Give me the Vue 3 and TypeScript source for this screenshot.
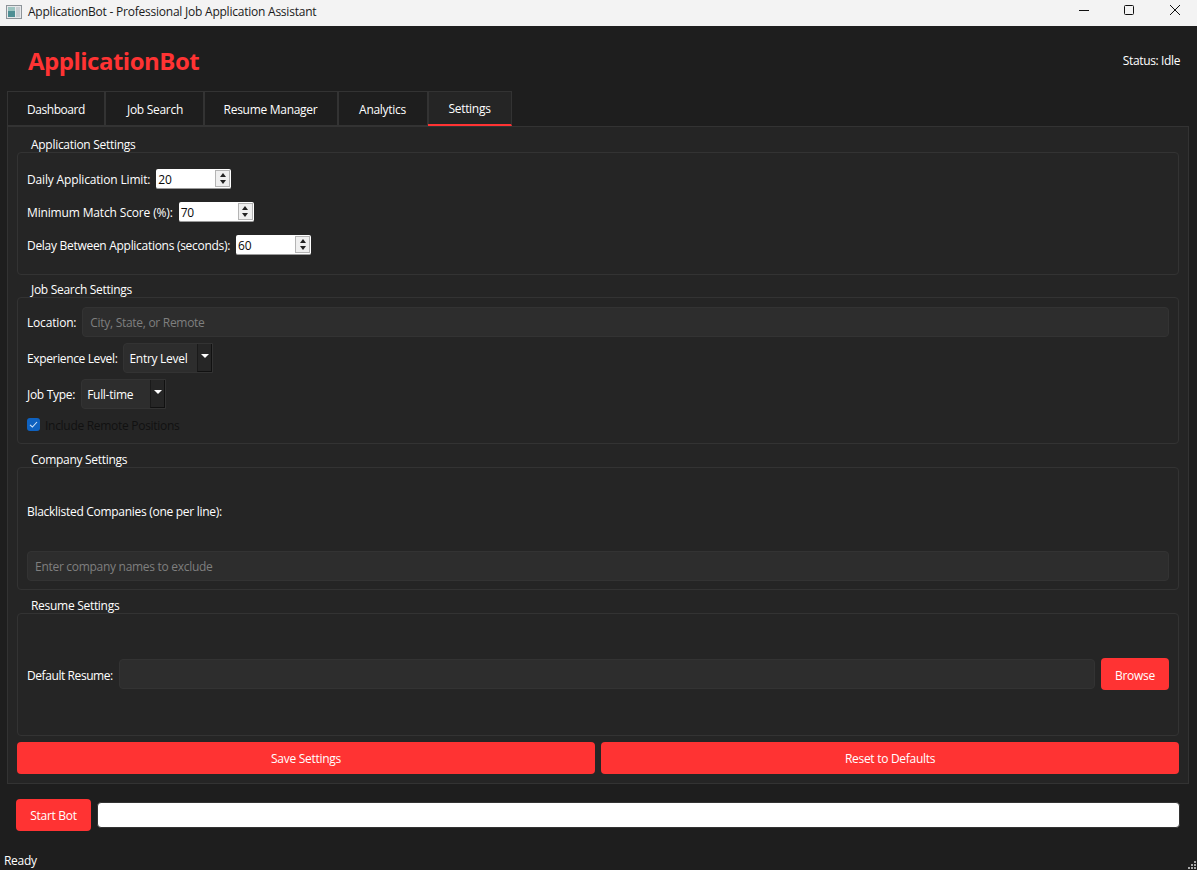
<script setup lang="ts">
const tabs = ['Dashboard', 'Job Search', 'Resume Manager', 'Analytics', 'Settings']
const spins = [
  { label: 'Daily Application Limit:', value: '20', cls: 'fit-daily' },
  { label: 'Minimum Match Score (%):', value: '70', cls: 'fit-score' },
  { label: 'Delay Between Applications (seconds):', value: '60', cls: '' },
]
const combos = [
  { label: 'Experience Level:', value: 'Entry Level', cls: 'combo-exp', fit: 'fit-exp' },
  { label: 'Job Type:', value: 'Full-time', cls: 'combo-job', fit: '' },
]
</script>

<template>
  <div class="window">
    <div class="titlebar">
      <svg class="app-icon" width="16" height="16" viewBox="0 0 16 16">
        <rect x="0.5" y="1.5" width="15" height="13" fill="#e6e8ea" stroke="#8d9499" />
        <rect x="2" y="3" width="7" height="10" fill="#4f8f94" />
        <rect x="2" y="3" width="7" height="4" fill="#9cc4c0" />
        <rect x="10" y="3" width="4" height="10" fill="#c9ced2" />
      </svg>
      <span class="title-text">ApplicationBot - Professional Job Application Assistant</span>
      <div class="win-controls">
        <svg width="12" height="12" viewBox="0 0 12 12"><path d="M1 6.5H11" stroke="#111" fill="none" /></svg>
        <svg width="12" height="12" viewBox="0 0 12 12"><rect x="1.5" y="1.5" width="9" height="9" rx="1" stroke="#111" fill="none" /></svg>
        <svg class="win-close" width="12" height="12" viewBox="0 0 12 12"><path d="M1 1L11 11M11 1L1 11" stroke="#111" fill="none" /></svg>
      </div>
    </div>

    <header class="header">
      <h1 class="brand">ApplicationBot</h1>
      <span class="status">Status: Idle</span>
    </header>

    <nav class="tabs">
      <div v-for="(t, i) in tabs" :key="t" class="tab" :class="[`tab-${i}`, { active: t === 'Settings' }]">{{ t }}</div>
    </nav>

    <main class="pane">
      <section class="group">
        <div class="group-title">Application Settings</div>
        <div class="box box-app">
          <div v-for="s in spins" :key="s.label" class="row" :class="s.cls">
            <label>{{ s.label }}</label>
            <div class="spin">
              <span class="spin-value">{{ s.value }}</span>
              <div class="spin-btns">
                <span class="arrow-up"></span>
                <span class="arrow-down"></span>
              </div>
            </div>
          </div>
        </div>
      </section>

      <section class="group">
        <div class="group-title">Job Search Settings</div>
        <div class="box box-job">
          <div class="row fit-location">
            <label>Location:</label>
            <input class="field grow" placeholder="City, State, or Remote" />
          </div>
          <div v-for="c in combos" :key="c.label" class="row" :class="c.fit">
            <label>{{ c.label }}</label>
            <div class="combo" :class="c.cls">
              <span class="combo-value">{{ c.value }}</span>
              <span class="combo-btn"><span class="combo-arrow"></span></span>
            </div>
          </div>
          <div class="check-row">
            <span class="checkbox">
              <svg width="9" height="9" viewBox="0 0 9 9"><path d="M1 4.8L3.4 7L8 2" stroke="#cfe3f7" stroke-width="1.1" fill="none" /></svg>
            </span>
            <span class="check-label">Include Remote Positions</span>
          </div>
        </div>
      </section>

      <section class="group">
        <div class="group-title">Company Settings</div>
        <div class="box box-company">
          <label>Blacklisted Companies (one per line):</label>
          <input class="field" placeholder="Enter company names to exclude" />
        </div>
      </section>

      <section class="group">
        <div class="group-title">Resume Settings</div>
        <div class="box box-resume">
          <label>Default Resume:</label>
          <input class="field grow" />
          <button class="btn browse">Browse</button>
        </div>
      </section>

      <div class="actions">
        <button class="btn action">Save Settings</button>
        <button class="btn action">Reset to Defaults</button>
      </div>
    </main>

    <div class="controls">
      <button class="btn start">Start Bot</button>
      <div class="progress"></div>
    </div>

    <footer class="statusbar">
      <span>Ready</span>
      <svg class="grip" width="10" height="10" viewBox="0 0 10 10" fill="#a8a8a8">
        <rect x="7" y="1" width="2" height="2" />
        <rect x="4" y="4" width="2" height="2" />
        <rect x="7" y="4" width="2" height="2" />
        <rect x="1" y="7" width="2" height="2" />
        <rect x="4" y="7" width="2" height="2" />
        <rect x="7" y="7" width="2" height="2" />
      </svg>
    </footer>
  </div>
</template>

<style>
html, body { margin: 0; background: #1e1e1e; }
</style>

<style scoped>
* { box-sizing: border-box; }
.window {
  width: 1197px;
  height: 870px;
  overflow: hidden;
  display: flex;
  flex-direction: column;
  background: #1e1e1e;
  color: #fff;
  font-family: "Open Sans", "Noto Sans", sans-serif;
  font-size: 12px;
  letter-spacing: -0.29px;
  line-height: 16px;
}
.titlebar {
  height: 26px;
  flex: none;
  background: #f3f3f3;
  color: #1a1a1a;
  display: flex;
  align-items: center;
  padding-left: 6px;
  padding-bottom: 2px;
}
.app-icon { margin-right: 6px; }
.title-text { flex: 1; letter-spacing: -0.23px; }
.win-controls {
  display: flex;
  gap: 33px;
  padding-right: 16px;
}
.win-controls svg { display: block; margin-top: -4px; }
.win-close { margin-left: 1px; }
.header {
  height: 65px;
  flex: none;
  display: flex;
  align-items: center;
  justify-content: space-between;
  padding: 4px 17px 0 28px;
}
.brand {
  margin: 0;
  color: #ff3333;
  font-size: 24px;
  line-height: 30px;
  font-weight: 700;
  letter-spacing: -0.5px;
}
.status { letter-spacing: -0.37px; }
.tabs {
  display: flex;
  flex: none;
  height: 36px;
  margin-left: 7px;
  margin-bottom: -1px;
  position: relative;
  z-index: 1;
}
.tab {
  height: 35px;
  display: flex;
  align-items: center;
  justify-content: center;
  border: 1px solid #333;
  background: #1e1e1e;
  padding-top: 2px;
}
.tab + .tab { border-left: none; box-shadow: inset 1px 0 0 #333; }
.tab-0 { width: 98px; letter-spacing: -0.45px; }
.tab-1 { width: 99px; padding-left: 2px; }
.tab-2 { width: 134px; }
.tab-3 { width: 90px; }
.tab-4 { width: 84px; }
.tab.active {
  background: #252525;
  border-bottom: 2px solid #ff3333;
}
.pane {
  width: 1182px;
  height: 658px;
  flex: none;
  margin-left: 7px;
  border: 1px solid #333;
  background: #252525;
  padding: 9px;
  display: flex;
  flex-direction: column;
}
.group { display: flex; flex-direction: column; }
.group + .group { margin-top: 7px; }
.group:nth-child(2) { margin-top: 6px; }
.group-title {
  height: 16px;
  padding-left: 14px;
  position: relative;
  top: 1px;
}
.box {
  border: 1px solid #333;
  border-radius: 4px;
  padding: 0 9px;
}
.box-app {
  height: 123px;
  padding-top: 16px;
  display: flex;
  flex-direction: column;
  gap: 13px;
}
.box-job {
  height: 147px;
  padding-top: 9px;
  display: flex;
  flex-direction: column;
  gap: 6px;
}
.box-company {
  height: 123px;
  display: flex;
  flex-direction: column;
  justify-content: flex-end;
  padding-bottom: 8px;
}
.box-company label { margin-bottom: 31px; }
.box-resume {
  height: 123px;
  display: flex;
  align-items: center;
  gap: 6px;
  padding-bottom: 1px;
}
.box-resume label { letter-spacing: -0.42px; padding-top: 4px; }
.box-resume .btn { padding-top: 4px; }
label { padding-top: 2px; }
.row {
  display: flex;
  align-items: center;
  gap: 6px;
}
.fit-daily label { letter-spacing: -0.16px; }
.fit-score label { letter-spacing: -0.15px; }
.fit-location label { letter-spacing: -0.18px; }
.fit-exp label { letter-spacing: -0.36px; }
.spin {
  width: 75px;
  height: 20px;
  background: #fff;
  border-radius: 2px;
  border-bottom: 1px solid #9a9a9a;
  color: #0a0a0a;
  display: flex;
  align-items: center;
  justify-content: space-between;
  padding: 0 1px 0 2px;
}
.spin-value { padding-top: 2px; }
.spin-btns {
  width: 15px;
  height: 17px;
  border: 1px solid #b4b4b4;
  background: #efefef;
  display: flex;
  flex-direction: column;
  align-items: center;
  justify-content: center;
  gap: 3px;
}
.arrow-up, .arrow-down {
  width: 0;
  height: 0;
  border-left: 3px solid transparent;
  border-right: 3px solid transparent;
}
.arrow-up { border-bottom: 4px solid #222; }
.arrow-down { border-top: 4px solid #222; }
.field {
  height: 30px;
  background: #2d2d2d;
  border: 1px solid #333;
  border-radius: 4px;
  padding: 0 7px;
  color: #fff;
  font: inherit;
  letter-spacing: inherit;
  outline: none;
  min-width: 0;
}
.field::placeholder { color: #7f7f7f; opacity: 1; }
.grow { flex: 1; }
.combo {
  height: 30px;
  background: #2d2d2d;
  border: 1px solid #333;
  border-radius: 4px 0 0 4px;
  display: flex;
  align-items: stretch;
  justify-content: space-between;
  padding-left: 5px;
}
.combo-exp { width: 90px; }
.combo-job { width: 85px; }
.combo-value { align-self: center; padding-top: 2px; }
.combo-btn {
  width: 15px;
  background: #262626;
  border-left: 1px solid #1a1a1a;
  border-right: 1px solid #111;
  border-bottom: 1px solid #111;
  display: flex;
  align-items: center;
  justify-content: center;
}
.combo-arrow {
  width: 0;
  height: 0;
  border-left: 4px solid transparent;
  border-right: 4px solid transparent;
  border-top: 4px solid #fff;
  margin-top: -3px;
}
.check-row {
  display: flex;
  align-items: flex-start;
  gap: 5px;
  margin-top: 3px;
}
.checkbox {
  width: 13px;
  height: 13px;
  background: #0f62c0;
  border-radius: 3px;
  display: flex;
  align-items: center;
  justify-content: center;
}
.check-label { color: #111; }
.btn {
  border: none;
  background: #ff3333;
  color: #fff;
  border-radius: 4px;
  height: 32px;
  font: inherit;
  letter-spacing: inherit;
  padding: 2px 0 0;
}
.browse { width: 68px; flex: none; }
.actions {
  display: flex;
  gap: 6px;
  margin-top: 6px;
}
.action { flex: 1; }
.controls {
  display: flex;
  flex: none;
  align-items: center;
  gap: 6px;
  margin: 15px 17px 0 16px;
}
.start { width: 75px; flex: none; }
.progress {
  flex: 1;
  height: 26px;
  background: #fff;
  border: 1px solid #333;
  border-radius: 4px;
}
.statusbar {
  flex: 1;
  display: flex;
  align-items: flex-end;
  justify-content: space-between;
  padding: 0 0 1px 4px;
}
.grip { margin-bottom: -1px; }
</style>
